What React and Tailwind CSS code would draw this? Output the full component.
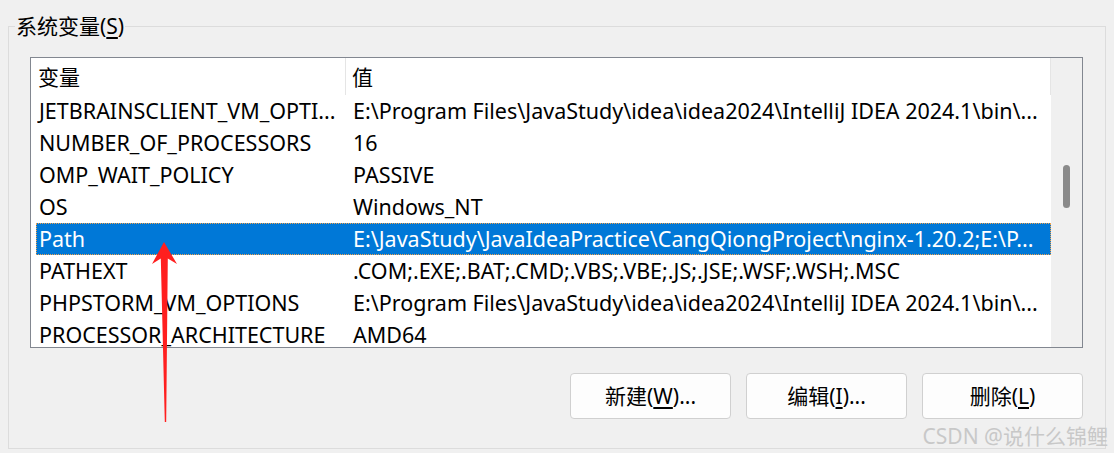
import React from "react";

const rows = [
  { name: "JETBRAINSCLIENT_VM_OPTI...", value: "E:\\Program Files\\JavaStudy\\idea\\idea2024\\IntelliJ IDEA 2024.1\\bin\\..." },
  { name: "NUMBER_OF_PROCESSORS", value: "16" },
  { name: "OMP_WAIT_POLICY", value: "PASSIVE" },
  { name: "OS", value: "Windows_NT" },
  { name: "Path", value: "E:\\JavaStudy\\JavaIdeaPractice\\CangQiongProject\\nginx-1.20.2;E:\\P...", selected: true },
  { name: "PATHEXT", value: ".COM;.EXE;.BAT;.CMD;.VBS;.VBE;.JS;.JSE;.WSF;.WSH;.MSC" },
  { name: "PHPSTORM_VM_OPTIONS", value: "E:\\Program Files\\JavaStudy\\idea\\idea2024\\IntelliJ IDEA 2024.1\\bin\\..." },
  { name: "PROCESSOR_ARCHITECTURE", value: "AMD64" },
];

const font = { fontFamily: '"Noto Sans", "Noto Sans CJK SC", sans-serif' };

const Button = ({ children }) => (
  <button className="w-[161px] h-[46px] bg-[#fdfdfd] border border-[#d0d0d0] rounded-[4px] text-[21px] leading-[30px] text-black flex items-center justify-center">
    {children}
  </button>
);

const App = () => {
  return (
    <div className="w-[1114px] h-[453px] bg-[#f0f0f0] relative overflow-hidden pl-[8px] pt-[13px] text-black" style={font}>
      <fieldset className="w-[1098px] h-[436px] border border-[#dcdcdc]">
        <legend className="ml-[6px] px-[1px] text-[21px] leading-[26px]">
          系统变量(<span className="underline underline-offset-[3px]">S</span>)
        </legend>

        {/* list view */}
        <div className="ml-[21px] mt-[18px] w-[1053px] h-[291px] border border-[#828790] bg-white flex overflow-hidden">
          <div className="w-[1020px] flex flex-col overflow-hidden">
            <div className="h-[37px] flex shrink-0 text-[21px] leading-[30px]">
              <div className="w-[314px] pl-[7px] flex items-center">变量</div>
              <div className="w-px h-[37px] bg-[#e5e5e5]" />
              <div className="flex-1 pl-[6px] flex items-center">值</div>
              <div className="w-px h-[37px] bg-[#e5e5e5]" />
            </div>
            {rows.map((r) => (
              <div
                key={r.name}
                className={
                  r.selected
                    ? "ml-[5px] h-[32px] shrink-0 flex items-center text-[21.5px] leading-[30px] bg-[#0078d7] text-white border border-dotted border-[#f0a24c]"
                    : "ml-[5px] h-[32px] shrink-0 flex items-center text-[21.5px] leading-[30px] border border-transparent"
                }
              >
                <div className="w-[309px] pl-[2px] whitespace-nowrap overflow-hidden">{r.name}</div>
                <div className="flex-1 pl-[7px] whitespace-nowrap overflow-hidden">{r.value}</div>
              </div>
            ))}
          </div>
          <div className="w-[31px] bg-[#f0f0f0] pt-[107px]">
            <div className="w-[7px] h-[43px] rounded-full bg-[#8a8a8a] mx-auto" />
          </div>
        </div>

        <div className="flex justify-end gap-[15px] pr-[22px] mt-[25px]">
          <Button>
            新建(<span className="underline underline-offset-[3px]">W</span>)...
          </Button>
          <Button>
            编辑(<span className="underline underline-offset-[3px]">I</span>)...
          </Button>
          <Button>
            删除(<span className="underline underline-offset-[3px]">L</span>)
          </Button>
        </div>
      </fieldset>

      {/* watermark */}
      <div className="absolute right-[6px] bottom-[3px] text-[21px] leading-[28px] text-[#c8c8c8]">CSDN @说什么锦鲤</div>

      {/* annotation arrow */}
      <svg className="absolute left-0 top-0" width="1114" height="453" viewBox="0 0 1114 453">
        <polygon
          points="164,242 177,264 167.8,258.5 166.2,422 164.8,422 160.8,258.5 152,264"
          fill="#ff1f1f"
        />
      </svg>
    </div>
  );
};

export default App;
